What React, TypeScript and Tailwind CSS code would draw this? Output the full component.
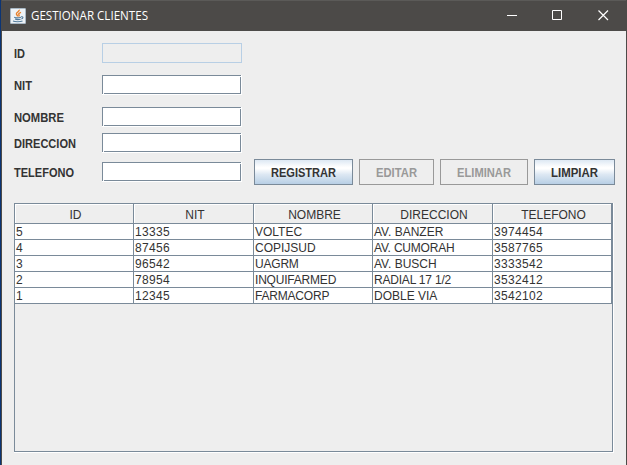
import React from "react";

const columns = ["ID", "NIT", "NOMBRE", "DIRECCION", "TELEFONO"];

const clients = [
  ["5", "13335", "VOLTEC", "AV. BANZER", "3974454"],
  ["4", "87456", "COPIJSUD", "AV. CUMORAH", "3587765"],
  ["3", "96542", "UAGRM", "AV. BUSCH", "3333542"],
  ["2", "78954", "INQUIFARMED", "RADIAL 17 1/2", "3532412"],
  ["1", "12345", "FARMACORP", "DOBLE VIA", "3542102"],
];

const grid = "grid grid-cols-[119px_120px_119px_120px_119px]";

const tightValues = ["UAGRM", "INQUIFARMED", "FARMACORP", "AV. CUMORAH", "RADIAL 17 1/2"];

function tracking(value: string) {
  if (/^\d+$/.test(value)) return "tracking-[0.33px]";
  return tightValues.includes(value) ? "tracking-[-0.2px]" : "";
}

// Rendered widths keep each caption on its label's pixel box.
function Caption({ text, width, bold }: { text: string; width: number; bold?: boolean }) {
  return (
    <svg width={width} height="16" className="block shrink-0 overflow-visible">
      <text
        x="0"
        y="12"
        textLength={width}
        lengthAdjust="spacingAndGlyphs"
        fill="currentColor"
        className={bold ? "text-[12px] font-bold" : "text-[12px]"}
      >
        {text}
      </text>
    </svg>
  );
}

function Field({ label, width, disabled, className }: { label: string; width: number; disabled?: boolean; className: string }) {
  return (
    <div className={`flex h-5 shrink-0 items-center ${className}`}>
      <div className="w-[88px] shrink-0 pt-px">
        <Caption text={label} width={width} bold />
      </div>
      {disabled ? (
        <div className="h-5 w-[140px] border border-[#b8cfe5] bg-[#eeeeee]" />
      ) : (
        <div className="h-5 w-[140px] border-r border-b border-white">
          <div className="relative size-full border border-[#7a8a99] bg-white before:absolute before:-bottom-px before:left-0 before:size-px before:bg-white after:absolute after:top-0 after:-right-px after:size-px after:bg-white" />
        </div>
      )}
    </div>
  );
}

function Button({ label, width, disabled, className }: { label: string; width: number; disabled?: boolean; className: string }) {
  return (
    <button
      className={`flex h-[26px] shrink-0 items-center justify-center border pt-px ${className} ${
        disabled
          ? "border-[#999999] text-[#999999]"
          : "border-[#7a8a99] bg-[linear-gradient(180deg,#dde8f3_0%,#ffffff_30%,#ffffff_36%,#dde8f3_60%,#b8cfe5_100%)]"
      }`}
    >
      <Caption text={label} width={width} bold />
    </button>
  );
}

function JavaIcon() {
  return (
    <svg width="16" height="16" viewBox="0 0 16 16" fill="none">
      <rect x="0.5" y="0.5" width="15" height="15" rx="0.5" fill="#edf2f6" stroke="#a9b8c5" />
      <path d="M9.2 1.8c.6 1.8-3 2.5-2.8 4.1.1.9 1.2 1.5 1.2 2.5M11 4.3C8.9 5 8.3 5.9 9 7c.4.6.1 1.1-.4 1.5" stroke="#e8802b" strokeWidth="1.4" />
      <path d="M4.2 9.2c1.6.7 5 .6 6.8.1M5 11.1c1.6.6 4 .5 5.6.1M3 13.1c2.2.9 7.5.8 9.5-.1M11.2 8.7c2.5-.3 2.1 1.9.2 2.2" stroke="#527b9b" strokeWidth="1.1" />
    </svg>
  );
}

export default function App() {
  return (
    <div className="flex h-[465px] w-[627px] flex-col overflow-hidden border-l border-[#0b3474] bg-[#eeeeee] font-['Liberation_Sans',Arial,sans-serif] text-[12px] text-[#333333]">
      <div className="flex min-h-0 flex-1 flex-col border-r border-l border-[#4c4a48]">
        <header className="flex h-[31px] shrink-0 items-center border-t border-[#5b5a58] bg-[#4c4a48] pl-2 font-['Open_Sans','Noto_Sans',sans-serif] text-white">
          <JavaIcon />
          <div className="ml-[5px]">
            <Caption text="GESTIONAR CLIENTES" width={117} />
          </div>
          <svg className="mr-4 ml-auto" width="103" height="12" fill="none" stroke="white">
            <path d="M0 5.5h10M45.5 .5h9v9h-9z" />
            <path d="M91.5 .5l9.5 9.5M101 .5l-9.5 9.5" strokeWidth="1.2" />
          </svg>
        </header>

        <main className="flex flex-col px-3 pt-3">
          <Field label="ID" width={11} disabled className="" />
          <Field label="NIT" width={18} className="mt-3" />
          <Field label="NOMBRE" width={50} className="mt-3" />
          <Field label="DIRECCION" width={62} className="mt-1.5" />
          <div className="mt-[6px] flex items-start">
            <Field label="TELEFONO" width={60} className="mt-[3px]" />
            <Button label="REGISTRAR" width={65} className="ml-3 w-[99px]" />
            <Button label="EDITAR" width={41} disabled className="ml-1.5 w-[75px]" />
            <Button label="ELIMINAR" width={54} disabled className="ml-1.5 w-[88px]" />
            <Button label="LIMPIAR" width={47} className="ml-1.5 w-[81px]" />
          </div>

          <section className="mt-[18px] h-[250px] w-[600px] border-r border-b border-white">
            <div className="size-full border border-[#7a8a99]">
              <div className={`h-5 ${grid} border-b border-[#7a8a99]`}>
                {columns.map((name) => (
                  <div key={name} className="flex items-center justify-center border-r border-[#7a8a99] pl-[3px] shadow-[inset_1px_1px_0_white]">
                    <span className="pt-1 text-[12px] leading-[15px]">{name}</span>
                  </div>
                ))}
              </div>
              {clients.map((client) => (
                <div key={client[0]} className={`h-4 ${grid} border-b border-[#7a8a99] bg-white`}>
                  {client.map((value, i) => (
                    <div key={i} className={`overflow-hidden border-r border-[#7a8a99] pl-px leading-[16px] whitespace-nowrap ${tracking(value)}`}>
                      {value}
                    </div>
                  ))}
                </div>
              ))}
            </div>
          </section>
        </main>
      </div>
    </div>
  );
}
